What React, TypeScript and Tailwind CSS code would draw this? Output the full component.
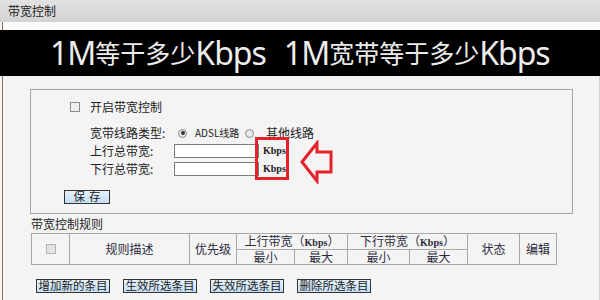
import React from 'react';

const cjk = '"Noto Sans CJK SC", "Noto Sans", sans-serif';

const Check = ({ dim }: { dim?: boolean }) => (
    <span
        className={`inline-block w-[10px] h-[10px] border ${dim ? 'border-[#b4b4b4] bg-[#e4e4e4]' : 'border-[#8c8c8c] bg-[#f0f0f0]'}`}
    />
);

const Radio = ({ on }: { on?: boolean }) => (
    <span className="inline-flex w-[9px] h-[9px] rounded-full border border-[#8c8c8c] bg-[#e8e8e8] items-center justify-center">
        {on && <span className="w-[4px] h-[4px] rounded-full bg-[#333]" />}
    </span>
);

const Btn = ({ label, w, track }: { label: string; w: string; track?: boolean }) => (
    <div
        className={`${w} h-[14px] border border-[#333] bg-gradient-to-b from-[#e6f2fc] to-[#c4def4] flex items-center justify-center whitespace-nowrap text-[11.5px] leading-none text-[#222] ${track ? 'tracking-[4px] pl-[4px]' : ''}`}
    >
        {label}
    </div>
);

const App = () => {
    return (
        <div className="w-[600px] h-[300px] overflow-hidden bg-[#f4f4f4] relative" style={{ fontFamily: cjk }}>
            {/* title bar */}
            <div className="h-[22px] bg-gradient-to-b from-[#e2e2e2] to-[#d2d2d2] flex items-center pl-[8px] text-[12px] text-[#222]">
                带宽控制
            </div>
            <div className="h-[8px] bg-[#fbfbfb] ml-[2px] border-l border-[#8a6e5e]" />

            {/* banner */}
            <div className="h-[46px] bg-black flex items-center pl-[50px] text-[#ececec] whitespace-nowrap">
                <span className="text-[32px] tracking-[-1px]" style={{ fontFamily: '"Noto Sans", sans-serif' }}>1M</span>
                <span className="text-[25px]">等于多少</span>
                <span className="text-[32px] tracking-[-1px]" style={{ fontFamily: '"Noto Sans", sans-serif' }}>Kbps</span>
                <span className="w-[18px]" />
                <span className="text-[32px] tracking-[-1px]" style={{ fontFamily: '"Noto Sans", sans-serif' }}>1M</span>
                <span className="text-[25px]">宽带等于多少</span>
                <span className="text-[32px] tracking-[-1px]" style={{ fontFamily: '"Noto Sans", sans-serif' }}>Kbps</span>
            </div>

            {/* body */}
            <div className="ml-[2px] h-[224px] border-l border-r border-[#8a6e5e] border-r-[#cfcfcf] pt-[13px] pl-[27px] text-[12px] text-[#222]">
                <div className="w-[543px] h-[125px] border border-[#a4a4a4] relative">
                    <div className="mt-[10px] h-[14px] flex items-center">
                        <span className="ml-[39px] flex"><Check /></span>
                        <span className="ml-[10px] leading-none">开启带宽控制</span>
                    </div>

                    <div className="mt-[12px] h-[14px] flex items-center">
                        <span className="ml-[59px] w-[88px] leading-none">宽带线路类型:</span>
                        <Radio on />
                        <span className="ml-[8px] w-[50px] text-[10px] leading-none">ADSL线路</span>
                        <Radio />
                        <span className="ml-[12px] leading-none">其他线路</span>
                    </div>

                    <div className="mt-[4px] h-[14px] flex items-center">
                        <span className="ml-[59px] w-[84px] leading-none">上行总带宽:</span>
                        <span className="w-[85px] h-[14px] border border-[#7c7c7c] bg-white" />
                        <span className="ml-[4px] text-[10px] font-bold leading-none" style={{ fontFamily: '"Liberation Serif", serif' }}>Kbps</span>
                    </div>

                    <div className="mt-[4px] h-[14px] flex items-center">
                        <span className="ml-[59px] w-[84px] leading-none">下行总带宽:</span>
                        <span className="w-[85px] h-[14px] border border-[#7c7c7c] bg-white" />
                        <span className="ml-[4px] text-[10px] font-bold leading-none" style={{ fontFamily: '"Liberation Serif", serif' }}>Kbps</span>
                    </div>

                    <div className="mt-[14px] ml-[33px] flex">
                        <Btn label="保存" w="w-[46px]" track />
                    </div>

                    {/* red highlight box and arrow */}
                    <div className="absolute left-[224px] top-[47px] w-[34px] h-[43px] border-[3px] border-[#e3222a]" />
                    <svg className="absolute left-[269px] top-[50px]" width="34" height="44" viewBox="0 0 34 44">
                        <path
                            d="M2 22 L17 3 L17 12 L31 12 L31 32 L17 32 L17 41 Z"
                            fill="none"
                            stroke="#e3222a"
                            strokeWidth="3"
                            strokeLinejoin="miter"
                        />
                    </svg>
                </div>

                <div className="mt-[2px] h-[15px] leading-[15px] ml-[1px]">带宽控制规则</div>

                <table className="ml-[1px] mt-[2px] border-collapse text-[12px] text-[#2a2a3a] text-center">
                    <tbody>
                        <tr className="h-[16px]">
                            <td rowSpan={2} className="w-[38px] border border-[#a8a8a8] p-0">
                                <span className="flex justify-center"><Check dim /></span>
                            </td>
                            <td rowSpan={2} className="w-[120px] border border-[#a8a8a8] p-0 leading-none">规则描述</td>
                            <td rowSpan={2} className="w-[47px] border border-[#a8a8a8] p-0 leading-none">优先级</td>
                            <td colSpan={2} className="border border-[#a8a8a8] p-0 leading-none">
                                上行带宽（<span className="text-[10px] font-bold" style={{ fontFamily: '"Liberation Serif", serif' }}>Kbps</span>）
                            </td>
                            <td colSpan={2} className="border border-[#a8a8a8] p-0 leading-none">
                                下行带宽（<span className="text-[10px] font-bold" style={{ fontFamily: '"Liberation Serif", serif' }}>Kbps</span>）
                            </td>
                            <td rowSpan={2} className="w-[52px] border border-[#a8a8a8] p-0 leading-none">状态</td>
                            <td rowSpan={2} className="w-[37px] border border-[#a8a8a8] p-0 leading-none">编辑</td>
                        </tr>
                        <tr className="h-[15px]">
                            <td className="w-[58px] border border-[#a8a8a8] p-0 leading-none">最小</td>
                            <td className="w-[53px] border border-[#a8a8a8] p-0 leading-none">最大</td>
                            <td className="w-[62px] border border-[#a8a8a8] p-0 leading-none">最小</td>
                            <td className="w-[58px] border border-[#a8a8a8] p-0 leading-none">最大</td>
                        </tr>
                    </tbody>
                </table>

                <div className="mt-[14px] ml-[6px] flex gap-[13px]">
                    <Btn label="增加新的条目" w="w-[74px]" />
                    <Btn label="生效所选条目" w="w-[74px]" />
                    <Btn label="失效所选条目" w="w-[74px]" />
                    <Btn label="删除所选条目" w="w-[74px]" />
                </div>
            </div>
        </div>
    );
};

export default App;
